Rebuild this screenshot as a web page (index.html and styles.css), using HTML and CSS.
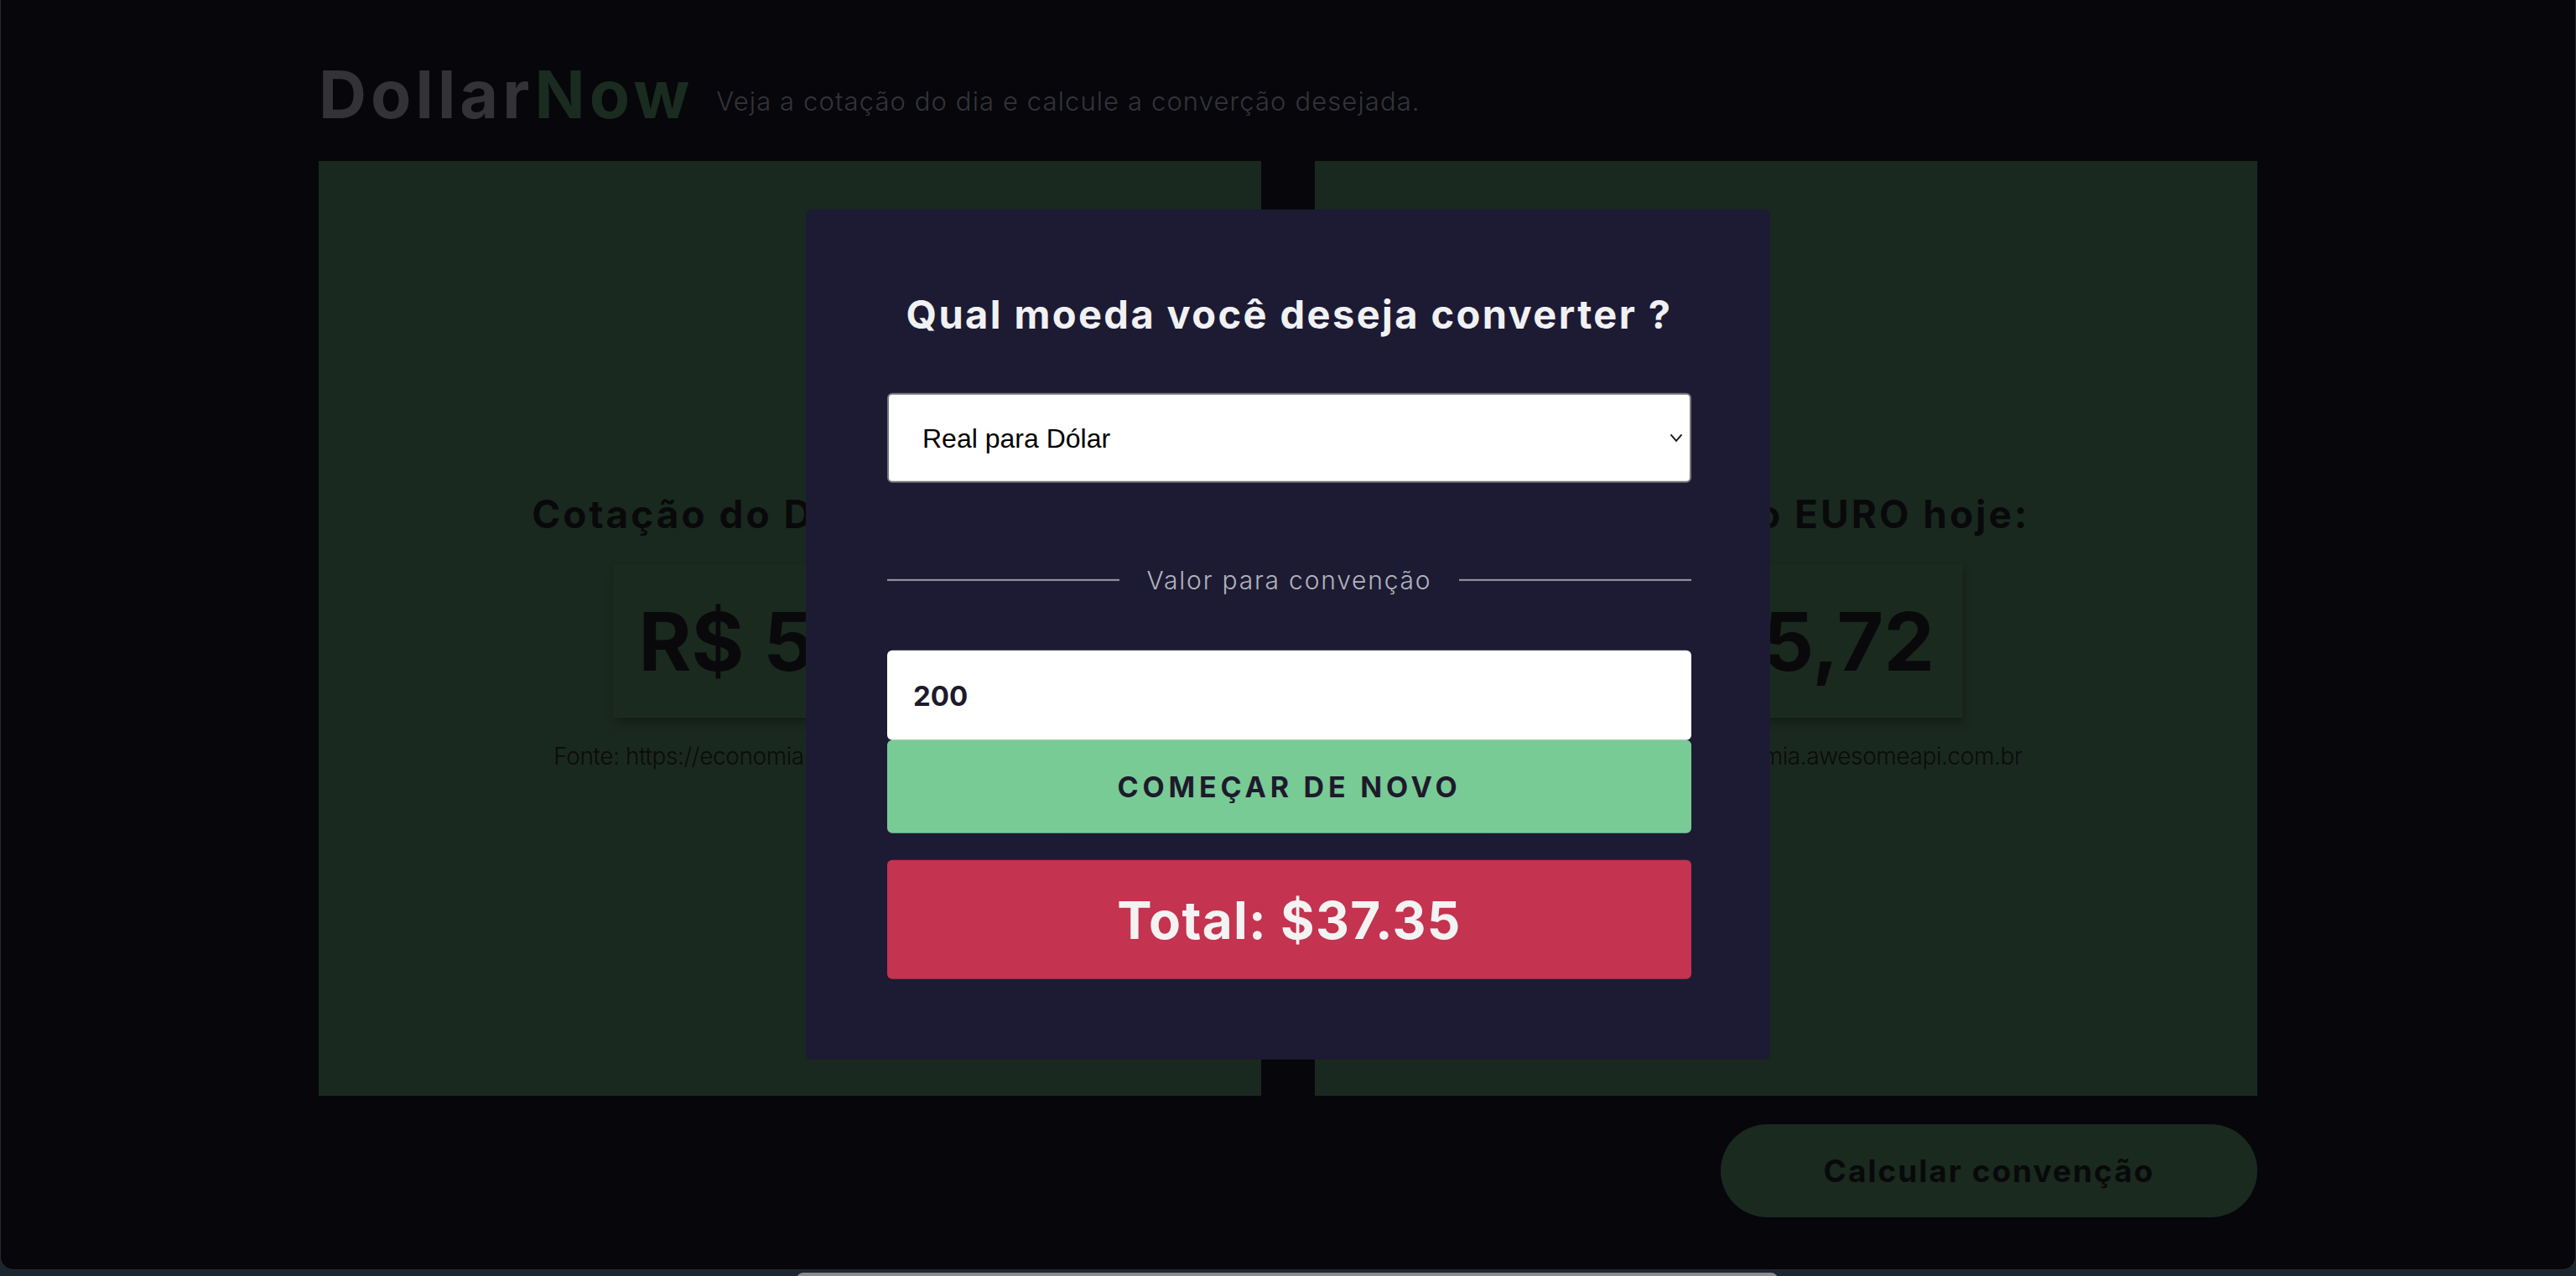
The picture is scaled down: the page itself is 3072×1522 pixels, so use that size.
FILE: index.html
```html
<!DOCTYPE html>
<html lang="pt-BR">
<head>
<meta charset="utf-8">
<title>DollarNow</title>
<link rel="stylesheet" href="styles.css">
</head>
<body>
<div class="window">
  <main class="app">
    <header class="brand">
      <h1 class="logo"><span class="logo-a">Dollar</span><span class="logo-b">Now</span></h1>
      <p class="tagline">Veja a cotação do dia e calcule a converção desejada.</p>
    </header>
    <section class="quotes">
      <article class="quote-card">
        <h2 class="quote-title">Cotação do DÓLAR hoje:</h2>
        <div class="price">R$ 5,35</div>
        <p class="source">Fonte: https://economia.awesomeapi.com.br</p>
      </article>
      <article class="quote-card">
        <h2 class="quote-title">Cotação do EURO hoje:</h2>
        <div class="price">R$ 5,72</div>
        <p class="source">Fonte: https://economia.awesomeapi.com.br</p>
      </article>
    </section>
    <div class="actions">
      <button class="calc-btn" type="button">Calcular convenção</button>
    </div>
  </main>

  <div class="modal">
    <h2 class="modal-title">Qual moeda você deseja converter ?</h2>
    <div class="select-wrap">
      <select class="currency-select">
        <option>Real para Dólar</option>
        <option>Real para Euro</option>
      </select>
      <svg class="chevron" width="16" height="11" viewBox="0 0 16 11"><path d="M1.5 1.5 L8 9 L14.5 1.5" fill="none" stroke="#111" stroke-width="1.8"/></svg>
    </div>
    <div class="divider"><span class="divider-line"></span><span class="divider-text">Valor para convenção</span><span class="divider-line"></span></div>
    <input class="amount" type="text" value="200">
    <button class="restart-btn" type="button">COMEÇAR DE NOVO</button>
    <div class="total">Total: $37.35</div>
  </div>
</div>
<div class="dock"></div>
</body>
</html>
```

FILE: styles.css
```css
html, body {
  margin: 0;
  padding: 0;
}
body {
  width: 3072px;
  height: 1522px;
  overflow: hidden;
  background: #1b2631;
  font-family: Inter, "Open Sans", sans-serif;
  position: relative;
}
.window {
  position: relative;
  box-sizing: border-box;
  height: 1515px;
  background: #06060b;
  border: 1px solid #2a2a2f;
  border-top: none;
  border-radius: 0 0 16px 16px;
  overflow: hidden;
}
.app {
  width: 2312px;
  margin: 0 auto;
  padding-top: 74px;
}
.brand {
  display: flex;
  align-items: flex-end;
  gap: 27px;
  height: 78px;
  margin-bottom: 40px;
}
.logo {
  margin: 0;
  font-size: 79px;
  line-height: 1;
  font-weight: 700;
  letter-spacing: 5px;
  white-space: nowrap;
}
.logo-a { color: #333335; }
.logo-b { color: #1a2c1f; }
.tagline {
  margin: 0 0 13px 0;
  font-size: 31px;
  line-height: 1.2;
  font-weight: 300;
  letter-spacing: 1.1px;
  color: #34343a;
  white-space: nowrap;
}
.quotes {
  display: grid;
  grid-template-columns: 1fr 1fr;
  gap: 64px;
}
.quote-card {
  height: 1115px;
  box-sizing: border-box;
  padding-top: 7px;
  background: #1a291f;
  display: flex;
  flex-direction: column;
  align-items: center;
  justify-content: center;
}
.quote-title {
  margin: 0 0 33px 0;
  font-size: 46px;
  line-height: 1.2;
  font-weight: 700;
  color: #09090b;
  letter-spacing: 3px;
}
.price {
  width: 420px;
  height: 182px;
  display: flex;
  align-items: center;
  justify-content: center;
  font-size: 96px;
  font-weight: 700;
  color: #09090b;
  background: #1a2a1f;
  box-shadow: 2px 6px 10px rgba(0, 0, 0, 0.28);
  border: 1px solid #1c2c21;
  box-sizing: border-box;
}
.source {
  margin: 30px 0 0 0;
  font-size: 28px;
  line-height: 1.2;
  font-weight: 300;
  letter-spacing: -0.4px;
  color: #0b0b0d;
}
.actions {
  display: flex;
  justify-content: flex-end;
  margin-top: 34px;
}
.calc-btn {
  width: 640px;
  height: 111px;
  border: none;
  border-radius: 56px;
  background: #1a2a1f;
  color: #09090b;
  font-family: Inter, "Open Sans", sans-serif;
  font-size: 37px;
  font-weight: 700;
  letter-spacing: 2px;
}
.modal {
  position: absolute;
  left: 50%;
  top: 50%;
  transform: translate(-50%, -50%);
  width: 1150px;
  box-sizing: border-box;
  padding: 97px 94px 96px 97px;
  background: #1c1b33;
  border-radius: 6px;
  display: flex;
  flex-direction: column;
}
.modal-title {
  margin: 0;
  text-align: center;
  font-size: 47px;
  line-height: 1.2;
  font-weight: 700;
  color: #f1f1f3;
  letter-spacing: 2.4px;
}
.select-wrap {
  position: relative;
  margin-top: 66px;
  height: 107px;
}
.currency-select {
  -webkit-appearance: none;
  appearance: none;
  width: 100%;
  height: 107px;
  box-sizing: border-box;
  border: 2px solid #77777c;
  border-radius: 6px;
  background: #ffffff;
  padding: 0 0 0 40px;
  font-family: "Liberation Sans", Arial, sans-serif;
  font-size: 32px;
  color: #000;
}
.chevron {
  position: absolute;
  right: 10px;
  top: 48px;
}
.divider {
  display: flex;
  align-items: center;
  gap: 33px;
  margin-top: 98px;
  height: 35px;
}
.divider-line {
  flex: 1;
  height: 2px;
  background: #9d9da6;
}
.divider-text {
  font-size: 30px;
  line-height: 1.2;
  font-weight: 300;
  letter-spacing: 1.8px;
  color: #b3b3bd;
  white-space: nowrap;
}
.amount {
  margin-top: 67px;
  height: 107px;
  box-sizing: border-box;
  border: none;
  border-radius: 6px;
  background: #ffffff;
  padding: 0 0 0 31px;
  font-family: Inter, "Open Sans", sans-serif;
  font-size: 33px;
  font-weight: 700;
  color: #1e1a2c;
  outline: none;
}
.restart-btn {
  height: 111px;
  border: none;
  border-radius: 6px;
  background: #79cb96;
  color: #1e1a2c;
  font-family: Inter, "Open Sans", sans-serif;
  font-size: 34px;
  font-weight: 700;
  letter-spacing: 4.8px;
}
.total {
  margin-top: 32px;
  height: 142px;
  border-radius: 6px;
  background: #c4334f;
  color: #f3f3f3;
  display: flex;
  align-items: center;
  justify-content: center;
  font-size: 62px;
  font-weight: 700;
  letter-spacing: 1.3px;
}
.dock {
  position: absolute;
  left: 950px;
  top: 1518px;
  width: 1170px;
  height: 10px;
  border-radius: 8px 8px 0 0;
  background: #8a8a8f;
}
```
